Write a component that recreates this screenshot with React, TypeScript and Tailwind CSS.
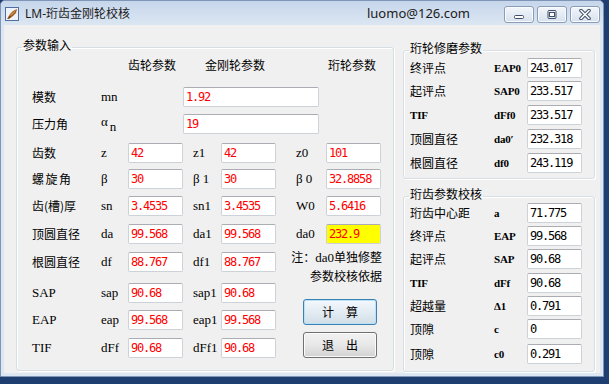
import React from 'react';

const cjk = "font-['Noto_Sans_CJK_SC',sans-serif]";
const sym = "font-['Liberation_Serif',serif] text-[13px]";
const symBold = "font-['Liberation_Serif',serif] text-[11px] font-bold tracking-[-0.2px]";
const val = "font-['DejaVu_Sans_Mono',monospace] text-[12px] tracking-[-1.2px]";

type FieldProps = { v: string; wide?: boolean; hl?: boolean; black?: boolean };

const Field: React.FC<FieldProps> = ({ v, wide, hl, black }) => (
  <div
    className={`${wide ? 'w-[136px]' : 'w-[55px]'} h-[20px] shrink-0 border border-[#cdd1d8] border-t-[#abadb3] rounded-[2px] pl-[2px] leading-[18px] whitespace-pre ${val} ${hl ? 'bg-[#ffff00]' : 'bg-white'} ${black ? 'text-black' : 'text-[#ff0000]'}`}
  >
    {v}
  </div>
);

type Row3 = {
  label: string;
  s1: string;
  v1: string;
  s2: string;
  v2: string;
  s3: string;
  v3: string;
  mt: string;
  hl?: boolean;
  wideLabel?: boolean;
};

const topRows: Row3[] = [
  { label: '齿数', s1: 'z', v1: '42', s2: 'z1', v2: '42', s3: 'z0', v3: '101', mt: 'mt-[9px]' },
  { label: '螺旋角', s1: 'β', v1: '30', s2: 'β 1', v2: '30', s3: 'β 0', v3: '32.8858', mt: 'mt-[6px]', wideLabel: true },
  { label: '齿(槽)厚', s1: 'sn', v1: '3.4535', s2: 'sn1', v2: '3.4535', s3: 'W0', v3: '5.6416', mt: 'mt-[7px]' },
  { label: '顶圆直径', s1: 'da', v1: '99.568', s2: 'da1', v2: '99.568', s3: 'da0', v3: '232.9', mt: 'mt-[8px]', hl: true },
];

type Row2 = { label: string; latin?: boolean; s1: string; v1: string; s2: string; v2: string; mt: string };

const lowRows: Row2[] = [
  { label: '根圆直径', s1: 'df', v1: '88.767', s2: 'df1', v2: '88.767', mt: 'mt-[8px]' },
  { label: 'SAP', latin: true, s1: 'sap', v1: '90.68', s2: 'sap1', v2: '90.68', mt: 'mt-[11px]' },
  { label: 'EAP', latin: true, s1: 'eap', v1: '99.568', s2: 'eap1', v2: '99.568', mt: 'mt-[7px]' },
  { label: 'TIF', latin: true, s1: 'dFf', v1: '90.68', s2: 'dFf1', v2: '90.68', mt: 'mt-[8px]' },
];

const modRows = [
  { label: '模数', v: '1.92', mt: 'mt-[14px]' },
  { label: '压力角', v: '19', mt: 'mt-[7px]' },
];

type RRow = { label: string; latin?: boolean; s: string; v: string; mt: string };

const grindRows: RRow[] = [
  { label: '终评点', s: 'EAP0', v: '243.017', mt: 'mt-[-1px]' },
  { label: '起评点', s: 'SAP0', v: '233.517', mt: 'mt-[3px]' },
  { label: 'TIF', latin: true, s: 'dFf0', v: '233.517', mt: 'mt-[4px]' },
  { label: '顶圆直径', s: 'da0′', v: '232.318', mt: 'mt-[4px]' },
  { label: '根圆直径', s: 'df0', v: '243.119', mt: 'mt-[4px]' },
];

const checkRows: RRow[] = [
  { label: '珩齿中心距', s: 'a', v: '71.775', mt: 'mt-[-2px]' },
  { label: '终评点', s: 'EAP', v: '99.568', mt: 'mt-[3px]' },
  { label: '起评点', s: 'SAP', v: '90.68', mt: 'mt-[3px]' },
  { label: 'TIF', latin: true, s: 'dFf', v: '90.68', mt: 'mt-[4px]' },
  { label: '超越量', s: 'Δ1', v: '0.791', mt: 'mt-[3px]' },
  { label: '顶隙', s: 'c', v: '0', mt: 'mt-[3px]' },
  { label: '顶隙', s: 'c0', v: '0.291', mt: 'mt-[5px]' },
];

const groupCls =
  'border border-[#d5dfe5] rounded-[3px] shadow-[inset_1px_1px_0_#ffffff,1px_1px_0_#ffffff] min-w-0';
const legendCls = `ml-[5px] px-[1px] pb-[4px] text-[12px] leading-[14px] text-black ${cjk}`;

const AppIcon = () => (
  <svg width="14" height="14" viewBox="0 0 14 14" className="shrink-0">
    <rect x="0.5" y="0.5" width="13" height="13" fill="#eef3fa" stroke="#4f6e9e" />
    <path d="M2 12 L5 7 L8 4 L12 2 L11 6 L8 9 L4 12 Z" fill="#9a5a22" />
    <path d="M4 9 L7 6 L11 3 L10 5 L7 8 Z" fill="#d9913f" />
    <path d="M3 11 L5 9 L6 10 Z" fill="#6b3a12" />
  </svg>
);

const CapButton: React.FC<{ kind: 'min' | 'max' | 'close' }> = ({ kind }) => (
  <div className="w-[30px] h-[17px] rounded-[3px] border border-[#8b9cb6] bg-gradient-to-b from-[#f4f7fb] to-[#d6e0ed] shadow-[inset_0_0_0_1px_#f9fbfd] flex items-center justify-center">
    <svg width="14" height="11" viewBox="0 0 14 11">
      {kind === 'min' && <rect x="2.5" y="6.5" width="9" height="3" rx="1" fill="#ffffff" stroke="#404f66" />}
      {kind === 'max' && (
        <>
          <rect x="3" y="1.5" width="8" height="8" rx="1" fill="none" stroke="#404f66" strokeWidth="1" />
          <rect x="4.5" y="3.5" width="5" height="4" fill="#ffffff" stroke="#404f66" strokeWidth="1" />
        </>
      )}
      {kind === 'close' && (
        <>
          <path d="M3 1.5 L11 9.5 M11 1.5 L3 9.5" stroke="#404f66" strokeWidth="3.6" strokeLinecap="round" />
          <path d="M3 1.5 L11 9.5 M11 1.5 L3 9.5" stroke="#ffffff" strokeWidth="1.6" strokeLinecap="round" />
        </>
      )}
    </svg>
  </div>
);

const RightRow: React.FC<{ r: RRow }> = ({ r }) => (
  <div className={`flex items-center h-[20px] ${r.mt}`}>
    <div className={`w-[84px] shrink-0 ${r.latin ? symBold : `text-[12px] ${cjk}`}`}>{r.label}</div>
    <div className={`w-[33px] shrink-0 whitespace-pre ${symBold}`}>{r.s}</div>
    <Field v={r.v} black />
  </div>
);

export default function App() {
  return (
    <div className="w-[609px] h-[384px] bg-[#1e3d70] overflow-hidden">
      <div className="w-[604px] h-[377px] flex flex-col bg-[#dde7f3] border border-[#7f95b6] rounded-t-[5px]">
        {/* title bar */}
        <div className="h-[24px] shrink-0 flex items-center pt-[2px] pl-[4px] pr-[3px] bg-gradient-to-b from-[#c6d6eb] to-[#dce6f2] rounded-t-[5px]">
          <AppIcon />
          <div className={`ml-[6px] text-[12px] text-[#1b1b1b] font-['Noto_Sans','Noto_Sans_CJK_SC',sans-serif]`}>LM-珩齿金刚轮校核</div>
          <div className="ml-auto mr-[34px] text-[13px] text-[#1b1b1b] font-['Noto_Sans',sans-serif]">luomo@126.com</div>
          <div className="flex gap-[3px]">
            <CapButton kind="min" />
            <CapButton kind="max" />
            <CapButton kind="close" />
          </div>
        </div>

        {/* client */}
        <div className="flex-1 mx-[3px] mb-[3px] bg-[#f0f0f0] flex pl-[12px] pt-[13px] text-black">
          <fieldset className={`w-[378px] h-[333px] shrink-0 ${groupCls}`}>
            <legend className={legendCls}>参数输入</legend>
            <div className="pl-[15px]">
              <div className={`flex mt-[1px] text-[12px] leading-[16px] ${cjk}`}>
                <div className="w-[96px] shrink-0" />
                <div>齿轮参数</div>
                <div className="ml-[29px]">金刚轮参数</div>
                <div className="ml-[63px]">珩轮参数</div>
              </div>

              {modRows.map((r, i) => (
                <div key={r.label} className={`flex items-center h-[20px] ${r.mt}`}>
                  <div className={`w-[69px] shrink-0 text-[12px] ${cjk}`}>{r.label}</div>
                  <div className={`w-[82px] shrink-0 ${sym}`}>
                    {i === 0 ? 'mn' : (
                      <>
                        <span className="align-[5px]">α</span>
                        <span className="ml-[2px]">n</span>
                      </>
                    )}
                  </div>
                  <Field v={r.v} wide />
                </div>
              ))}

              {topRows.map((r) => (
                <div key={r.label} className={`flex items-center h-[20px] ${r.mt}`}>
                  <div className={`w-[69px] shrink-0 text-[12px] ${cjk} ${r.wideLabel ? 'tracking-[1.5px]' : ''}`}>{r.label}</div>
                  <div className={`w-[27px] shrink-0 ${sym}`}>{r.s1}</div>
                  <Field v={r.v1} />
                  <div className={`w-[38px] shrink-0 pl-[10px] whitespace-pre ${sym}`}>{r.s2}</div>
                  <Field v={r.v2} />
                  <div className={`w-[50px] shrink-0 pl-[20px] whitespace-pre ${sym}`}>{r.s3}</div>
                  <Field v={r.v3} hl={r.hl} />
                </div>
              ))}

              <div className="flex">
                <div className="w-[245px] shrink-0">
                  {lowRows.map((r) => (
                    <div key={r.label} className={`flex items-center h-[20px] ${r.mt}`}>
                      <div className={`w-[69px] shrink-0 ${r.latin ? sym : `text-[12px] ${cjk}`}`}>{r.label}</div>
                      <div className={`w-[27px] shrink-0 ${sym}`}>{r.s1}</div>
                      <Field v={r.v1} />
                      <div className={`w-[38px] shrink-0 pl-[10px] ${sym}`}>{r.s2}</div>
                      <Field v={r.v2} />
                    </div>
                  ))}
                </div>
                <div className="w-[105px] shrink-0 flex flex-col">
                  <div className={`mt-[4px] text-right text-[12px] leading-[18px] whitespace-nowrap ${cjk}`}>
                    注：<span className={sym}>da0</span>单独修整
                  </div>
                  <div className={`text-right text-[12px] leading-[18px] ${cjk}`}>参数校核依据</div>
                  <button className={`mt-[14px] ml-[26px] w-[74px] h-[26px] rounded-[3px] border border-[#3c7fb1] bg-gradient-to-b from-[#f3f8fc] via-[#e3ecf3] to-[#d2dde6] shadow-[inset_0_0_0_1px_#b8e2f8] text-[12px] ${cjk}`}>
                    计　算
                  </button>
                  <button className={`mt-[7px] ml-[26px] w-[74px] h-[26px] rounded-[3px] border border-[#707070] bg-gradient-to-b from-[#f2f2f2] via-[#e8e8e8] to-[#d2d2d2] shadow-[inset_0_0_0_1px_#fbfbfb] text-[12px] ${cjk}`}>
                    退　出
                  </button>
                </div>
              </div>
            </div>
          </fieldset>

          <div className="ml-[9px] w-[192px] shrink-0 flex flex-col">
            <fieldset className={`mt-[3px] h-[138px] ${groupCls}`}>
              <legend className={legendCls}>珩轮修磨参数</legend>
              <div className="pl-[6px]">
                {grindRows.map((r) => (
                  <RightRow key={r.label} r={r} />
                ))}
              </div>
            </fieldset>
            <fieldset className={`mt-[8px] h-[185px] ${groupCls}`}>
              <legend className={legendCls}>珩齿参数校核</legend>
              <div className="pl-[6px]">
                {checkRows.map((r, i) => (
                  <RightRow key={i} r={r} />
                ))}
              </div>
            </fieldset>
          </div>
        </div>
      </div>
    </div>
  );
}
